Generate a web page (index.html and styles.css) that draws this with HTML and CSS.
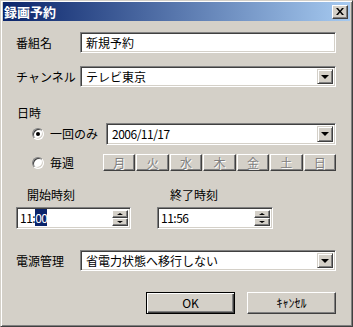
FILE: index.html
```html
<!DOCTYPE html>
<html lang="ja">
<head>
    <meta charset="UTF-8">
    <title>録画予約</title>
    <link rel="stylesheet" href="styles.css">
</head>
<body>
    <div class="dialog">
        <div class="titlebar">
            <span class="title">録画予約</span>
            <span class="close-btn">
                <svg width="8" height="7" viewBox="0 0 8 7"><path d="M0 0h2l2 2.5L6 0h2L5 3.5 8 7H6L4 4.5 2 7H0l3-3.5z" fill="#000"/></svg>
            </span>
        </div>

        <div class="content">
            <div class="field-row">
                <span class="label">番組名</span>
                <div class="sunken edit"><span class="value">新規予約</span></div>
            </div>

            <div class="field-row gap">
                <span class="label">チャンネル</span>
                <div class="sunken combo">
                    <span class="value">テレビ東京</span>
                    <span class="drop"><span class="arrow-down"></span></span>
                </div>
            </div>

            <div class="section-label">日時</div>

            <div class="radio-row once">
                <span class="option">
                    <span class="radio checked"></span>
                    <span class="radio-text">一回のみ</span>
                </span>
                <div class="sunken combo date">
                    <span class="value num">2006/11/17</span>
                    <span class="drop"><span class="arrow-down"></span></span>
                </div>
            </div>

            <div class="radio-row weekly">
                <span class="option narrow">
                    <span class="radio"></span>
                    <span class="radio-text">毎週</span>
                </span>
                <div class="days">
                    <span class="day">月</span>
                    <span class="day">火</span>
                    <span class="day">水</span>
                    <span class="day">木</span>
                    <span class="day">金</span>
                    <span class="day">土</span>
                    <span class="day">日</span>
                </div>
            </div>

            <div class="times">
                <div class="time-col">
                    <div class="time-label">開始時刻</div>
                    <div class="sunken spin">
                        <span class="value num">11:<span class="selected">00</span></span>
                        <span class="spin-btns">
                            <span class="spin-btn"><span class="arrow-up"></span></span>
                            <span class="spin-btn"><span class="arrow-down small"></span></span>
                        </span>
                    </div>
                </div>
                <div class="time-col end">
                    <div class="time-label">終了時刻</div>
                    <div class="sunken spin">
                        <span class="value num">11:56</span>
                        <span class="spin-btns">
                            <span class="spin-btn"><span class="arrow-up"></span></span>
                            <span class="spin-btn"><span class="arrow-down small"></span></span>
                        </span>
                    </div>
                </div>
            </div>

            <div class="field-row power">
                <span class="label">電源管理</span>
                <div class="sunken combo">
                    <span class="value">省電力状態へ移行しない</span>
                    <span class="drop"><span class="arrow-down"></span></span>
                </div>
            </div>

            <div class="actions">
                <span class="btn default">OK</span>
                <span class="btn">ｷｬﾝｾﾙ</span>
            </div>
        </div>
    </div>
</body>
</html>
```

FILE: styles.css
```css
body {
    margin: 0;
    background: #d4d0c8;
    font-family: "Noto Sans CJK JP", "Liberation Sans", sans-serif;
    font-size: 12px;
    color: #000;
}
.dialog {
    width: 353px;
    height: 327px;
    box-sizing: border-box;
    padding: 1px 2px 2px 2px;
    background: #d4d0c8;
    border: 1px solid;
    border-color: #d4d0c8 #404040 #404040 #d4d0c8;
    box-shadow: inset 1px 1px #fff, inset -1px -1px #808080;
}
.titlebar {
    height: 19px;
    display: flex;
    align-items: center;
    justify-content: space-between;
    padding: 0 2px 0 1px;
    background: linear-gradient(90deg, #0a246a, #a6caf0);
}
.title {
    color: #fff;
    font-weight: bold;
    font-size: 13px;
    line-height: 15px;
}
.close-btn {
    width: 16px;
    height: 14px;
    box-sizing: border-box;
    display: flex;
    align-items: center;
    justify-content: center;
    background: #d4d0c8;
    border: 1px solid;
    border-color: #fff #404040 #404040 #fff;
    box-shadow: inset -1px -1px #808080;
}

.content {
    padding: 11px 14px 0 13px;
}

/* 3D frames */
.sunken {
    box-sizing: border-box;
    background: #fff;
    border: 1px solid;
    border-color: #808080 #fff #fff #808080;
    box-shadow: inset 1px 1px #404040, inset -1px -1px #d4d0c8;
    padding: 2px;
    display: flex;
    align-items: center;
}
.value {
    flex: 1;
    padding-left: 3px;
    line-height: 14px;
    white-space: nowrap;
}
.num {
    letter-spacing: -0.5px;
}

.field-row {
    display: flex;
    align-items: center;
}
.field-row.gap {
    margin-top: 13px;
}
.label {
    width: 64px;
    flex: none;
}
.field-row .sunken {
    flex: 1;
    height: 21px;
}

.drop {
    width: 16px;
    align-self: stretch;
    box-sizing: border-box;
    display: flex;
    align-items: center;
    justify-content: center;
    background: #d4d0c8;
    border: 1px solid;
    border-color: #d4d0c8 #404040 #404040 #d4d0c8;
    box-shadow: inset 1px 1px #fff, inset -1px -1px #808080;
}
.arrow-down {
    width: 0;
    height: 0;
    border-left: 4px solid transparent;
    border-right: 4px solid transparent;
    border-top: 4px solid #000;
}
.arrow-down.small,
.arrow-up {
    border-left-width: 3px;
    border-right-width: 3px;
}
.arrow-down.small {
    border-top-width: 2px;
}
.arrow-up {
    width: 0;
    height: 0;
    border-left: 3px solid transparent;
    border-right: 3px solid transparent;
    border-bottom: 2px solid #000;
}

.section-label {
    margin-top: 19px;
    padding-left: 1px;
    line-height: 14px;
}

.radio-row {
    display: flex;
    align-items: center;
    padding-left: 16px;
}
.radio-row.once {
    margin-top: 3px;
    height: 22px;
}
.radio-row.weekly {
    margin-top: 9px;
    height: 17px;
}
.option {
    width: 74px;
    flex: none;
    display: flex;
    align-items: center;
}
.option.narrow {
    width: 71px;
}
.radio {
    width: 12px;
    height: 12px;
    box-sizing: border-box;
    border-radius: 50%;
    background: #fff;
    border: 1px solid;
    border-color: #808080 #fff #fff #808080;
    box-shadow: inset 1px 1px #404040, inset -1px -1px #d4d0c8;
    display: flex;
    align-items: center;
    justify-content: center;
}
.radio.checked::after {
    content: "";
    width: 4px;
    height: 4px;
    border-radius: 50%;
    background: #000;
}
.radio-text {
    margin-left: 6px;
    line-height: 14px;
}
.combo.date {
    flex: 1;
    height: 22px;
}

.days {
    flex: 1;
    display: flex;
    gap: 1px;
    height: 17px;
}
.day {
    flex: 1;
    box-sizing: border-box;
    display: flex;
    align-items: center;
    justify-content: center;
    line-height: 13px;
    color: #808080;
    text-shadow: 1px 1px #fff;
    background: #d4d0c8;
    border: 1px solid;
    border-color: #fff #404040 #404040 #fff;
    box-shadow: inset -1px -1px #808080;
}

.times {
    margin-top: 17px;
    display: grid;
    grid-template-columns: 115px 116px;
    column-gap: 26px;
}
.time-label {
    padding-left: 11px;
    line-height: 14px;
}
.time-col.end .time-label {
    padding-left: 13px;
}
.spin {
    margin-top: 5px;
    height: 22px;
}
.spin .value {
    padding-left: 1px;
}
.selected {
    background: #0a246a;
    color: #fff;
}
.spin-btns {
    width: 16px;
    align-self: stretch;
    display: flex;
    flex-direction: column;
}
.spin-btn {
    flex: 1;
    box-sizing: border-box;
    display: flex;
    align-items: center;
    justify-content: center;
    background: #d4d0c8;
    border: 1px solid;
    border-color: #fff #404040 #404040 #fff;
    box-shadow: inset -1px -1px #808080;
}

.field-row.power {
    margin-top: 21px;
}

.actions {
    margin-top: 21px;
    display: flex;
    justify-content: flex-end;
    gap: 12px;
}
.btn {
    width: 89px;
    height: 22px;
    box-sizing: border-box;
    display: flex;
    align-items: center;
    justify-content: center;
    background: #d4d0c8;
    border: 1px solid;
    border-color: #fff #404040 #404040 #fff;
    box-shadow: inset -1px -1px #808080;
    line-height: 14px;
}
.btn.default {
    border-color: #000;
    box-shadow: inset 1px 1px #fff, inset -1px -1px #404040, inset -2px -2px #808080;
}
```
